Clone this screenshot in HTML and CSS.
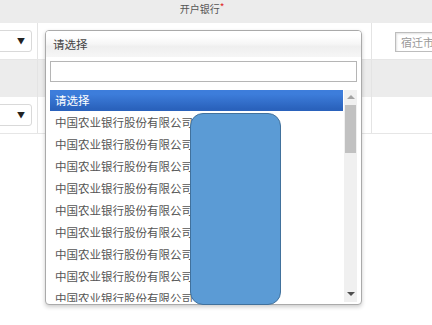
FILE: index.html
```html
<!DOCTYPE html>
<html lang="zh-CN">

<head>
  <meta charset="UTF-8">
  <meta name="viewport" content="width=device-width, initial-scale=1.0">
  <title>开户银行</title>
  <link rel="stylesheet" href="styles.css">
</head>

<body>

  <div class="form">
    <div class="form-head">
      <span class="label">开户银行<i>*</i></span>
    </div>

    <!-- first row -->
    <div class="form-row">
      <div class="cell cell-first"><div class="select">▼</div></div>
      <div class="cell cell-mid"></div>
      <div class="cell cell-last"><div class="text-input">宿迁市</div></div>
    </div>

    <div class="form-row grey-row">
      <div class="cell cell-first"></div>
      <div class="cell cell-mid"></div>
      <div class="cell cell-last"></div>
    </div>

    <!-- second row -->
    <div class="form-row">
      <div class="cell cell-first"><div class="select">▼</div></div>
      <div class="cell cell-mid"></div>
      <div class="cell cell-last"></div>
    </div>
  </div>

  <!-- opened bank dropdown -->
  <div class="dropdown">
    <div class="dropdown-head">请选择</div>
    <div class="dropdown-search"><div class="search-box"></div></div>
    <div class="dropdown-body">
      <ul class="options">
        <li class="active">请选择</li>
        <li>中国农业银行股份有限公司</li>
        <li>中国农业银行股份有限公司</li>
        <li>中国农业银行股份有限公司</li>
        <li>中国农业银行股份有限公司</li>
        <li>中国农业银行股份有限公司</li>
        <li>中国农业银行股份有限公司</li>
        <li>中国农业银行股份有限公司</li>
        <li>中国农业银行股份有限公司</li>
        <li>中国农业银行股份有限公司</li>
      </ul>
      <div class="scrollbar">
        <span class="arrow-up"></span>
        <span class="thumb"></span>
        <span class="arrow-down"></span>
      </div>
    </div>
  </div>

  <!-- redaction block -->
  <div class="mask"></div>

</body>

</html>
```

FILE: styles.css
```css
body {
  margin: 0;
  padding: 0;
  background-color: #fff;
  font-family: 'Noto Sans CJK SC', 'Noto Sans', sans-serif;
  color: #444;
  overflow: hidden;
}

.form {
  width: 100%;
}

.form-head {
  height: 23px;
  background-color: #ececec;
  display: flex;
  justify-content: center;
}

.label {
  font-size: 10px;
  line-height: 17px;
  color: #555;
  margin-left: -28px;
}

.label i {
  font-style: normal;
  color: #e0282a;
  font-size: 10px;
  vertical-align: top;
  line-height: 13px;
}

.form-row {
  display: grid;
  grid-template-columns: 38px 334px 1fr;
  height: 36px;
  border-bottom: 1px solid #e6e6e6;
}

.grey-row {
  height: 37px;
  background-color: #ececec;
  border-bottom: none;
}

.cell {
  border-right: 1px solid #e4e4e4;
  min-width: 0;
}

.cell-last {
  border-right: none;
  overflow: hidden;
}

.select {
  margin: 7px 0 0 -10px;
  width: 34px;
  height: 20px;
  border: 1px solid #d9d9d9;
  border-radius: 3px;
  background-color: #fff;
  font-size: 8px;
  line-height: 20px;
  color: #222;
  text-align: right;
  padding-right: 6px;
  box-sizing: content-box;
}

.text-input {
  margin: 9px 0 0 23px;
  width: 60px;
  height: 18px;
  border: 1px solid #bdbdbd;
  border-right: none;
  box-shadow: inset 1px 1px 2px rgba(0, 0, 0, 0.12);
  font-size: 11px;
  line-height: 18px;
  color: #999;
  padding-left: 5px;
  white-space: nowrap;
}

/* dropdown popup */
.dropdown {
  position: absolute;
  left: 45px;
  top: 30px;
  width: 315px;
  height: 273px;
  border: 1px solid #aaa;
  border-radius: 4px;
  background-color: #fff;
  box-shadow: 0 2px 4px rgba(0, 0, 0, 0.2);
  overflow: hidden;
}

.dropdown-head {
  height: 26px;
  line-height: 26px;
  padding-left: 7px;
  font-size: 11.5px;
  color: #444;
  background: linear-gradient(#fff 20%, #f6f6f6 50%, #efefef 60%, #f6f6f6 100%);
}

.dropdown-search {
  padding: 4px 4px 0 4px;
}

.search-box {
  height: 19px;
  border: 1px solid #b5b5b5;
  background-color: #fff;
}

.dropdown-body {
  display: flex;
  margin: 8px 4px 0 4px;
  height: 212px;
  overflow: hidden;
}

.options {
  list-style: none;
  margin: 0;
  padding: 0;
  flex: 1;
}

.options li {
  height: 22px;
  line-height: 22px;
  padding-left: 5px;
  font-size: 11.5px;
  color: #555;
  white-space: nowrap;
}

.options li.active {
  height: 21px;
  line-height: 21px;
  color: #fff;
  background: linear-gradient(#3d7ddb 20%, #2a62bc 90%);
}

.scrollbar {
  width: 13px;
  margin-left: 1px;
  background-color: #f0f0f0;
  display: flex;
  flex-direction: column;
  align-items: center;
}

.arrow-up {
  margin-top: 5px;
  border-left: 4px solid transparent;
  border-right: 4px solid transparent;
  border-bottom: 4px solid #a3a3a3;
}

.thumb {
  margin-top: 6px;
  width: 11px;
  height: 48px;
  background-color: #c1c1c1;
}

.arrow-down {
  margin-top: auto;
  margin-bottom: 6px;
  border-left: 4px solid transparent;
  border-right: 4px solid transparent;
  border-top: 4px solid #505050;
}

.mask {
  position: absolute;
  left: 190px;
  top: 113px;
  width: 89px;
  height: 190px;
  border: 1.5px solid #41719c;
  border-radius: 13px;
  background-color: #5b9bd5;
}
```
